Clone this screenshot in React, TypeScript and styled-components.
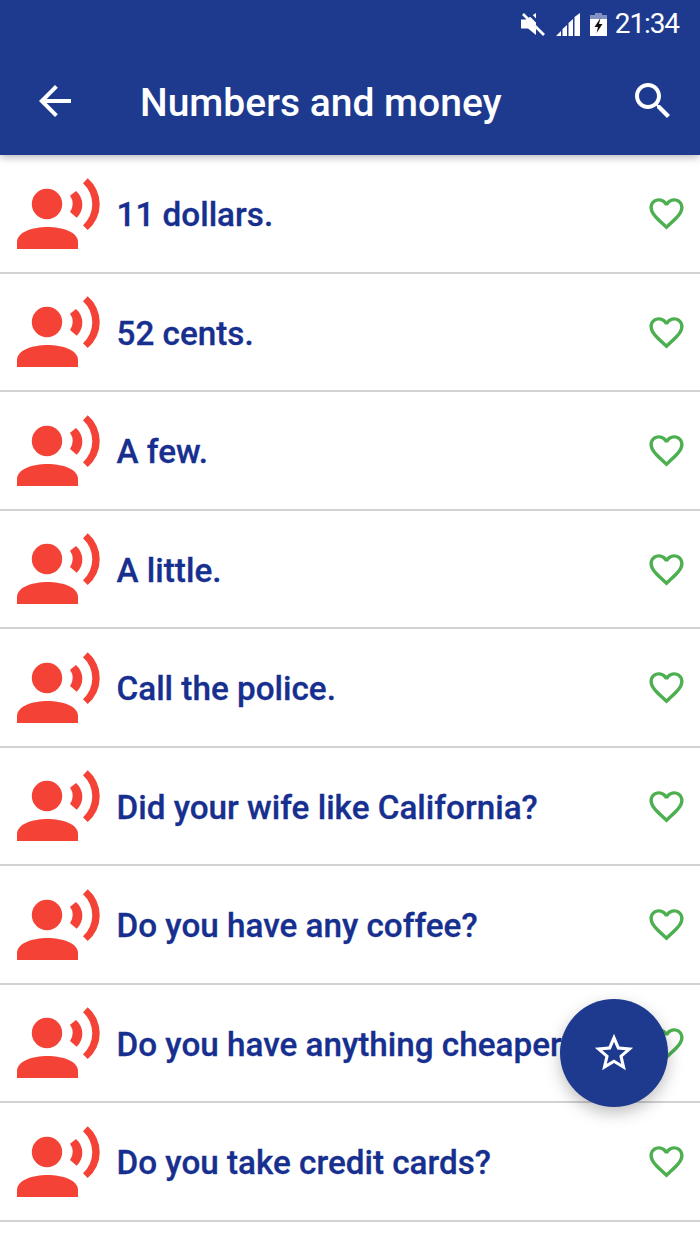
import styled, { createGlobalStyle } from 'styled-components';

const phrases = [
  '11 dollars.',
  '52 cents.',
  'A few.',
  'A little.',
  'Call the police.',
  'Did your wife like California?',
  'Do you have any coffee?',
  'Do you have anything cheaper?',
  'Do you take credit cards?',
];

const GlobalStyle = createGlobalStyle`
  html, body {
    margin: 0;
    padding: 0;
    background: #fff;
    font-family: Roboto, "Liberation Sans", sans-serif;
  }
`;

const Screen = styled.div`
  position: relative;
  width: 700px;
  height: 1244px;
  overflow: hidden;
  background: #fff;
`;

const Header = styled.header`
  position: relative;
  z-index: 1;
  height: 155px;
  background: #1e3a8f;
  box-shadow: 0 2px 8px rgba(0, 0, 0, 0.3);
`;

const StatusBar = styled.div`
  height: 48px;
  display: flex;
  align-items: center;
  justify-content: flex-end;
  padding-right: 21px;
  color: #fff;
`;

const Clock = styled.span`
  font-size: 28px;
  line-height: 48px;
  letter-spacing: -1.1px;
  margin-left: 8px;
`;

const StatusIcon = styled.svg<{ $gap?: number }>`
  display: block;
  margin-left: ${(p) => p.$gap ?? 0}px;
`;

const Toolbar = styled.div`
  height: 107px;
  display: flex;
  align-items: flex-start;
  padding: 29px 23px 0 31px;
`;

const Title = styled.h1`
  flex: 1;
  margin: 0 0 0 61px;
  padding-top: 2px;
  font-size: 39px;
  line-height: 48px;
  font-weight: 500;
  color: #fff;
  white-space: nowrap;
`;

const ToolIcon = styled.svg`
  display: block;
  width: 48px;
  height: 48px;
  fill: #fff;
`;

const List = styled.ul`
  list-style: none;
  margin: 0;
  padding: 0;
`;

const Row = styled.li`
  box-sizing: border-box;
  height: 118.5px;
  display: flex;
  align-items: center;
  padding: 1px 13px 0 14px;
  border-bottom: 2px solid #d2d2d2;
`;

const SpeakerIcon = styled.svg`
  flex: none;
  width: 88px;
  height: 76px;
  fill: #f44336;
`;

const Phrase = styled.span`
  flex: 1;
  margin-left: 14.5px;
  padding-top: 2px;
  font-size: 33.25px;
  font-weight: 500;
  color: #172f8f;
  -webkit-text-stroke: 0.3px #172f8f;
  white-space: nowrap;
`;

const Heart = styled.svg`
  flex: none;
  width: 41px;
  height: 41px;
  fill: #4caf50;
`;

const Fab = styled.button`
  position: absolute;
  left: 560px;
  top: 999px;
  width: 108px;
  height: 108px;
  padding: 0;
  border: none;
  border-radius: 50%;
  background: #1e3a8f;
  display: flex;
  align-items: center;
  justify-content: center;
  box-shadow: 0 6px 16px rgba(0, 0, 0, 0.25);
`;

const FabStar = styled.svg`
  width: 46px;
  height: 46px;
  fill: #fff;
`;

function SpeakingPerson() {
  return (
    <SpeakerIcon viewBox="0 0 88 76">
      <circle cx="33" cy="28" r="15.2" />
      <path d="M3 73V66C3 56 19 51 33.5 51C48 51 64 56 64 66V73Z" />
      <path d="M62 15A17.9 17.9 0 0 1 62.7 41.7L56 36A13.6 13.6 0 0 0 56 19.7Z" />
      <path d="M73.7 2.3A33.8 33.8 0 0 1 73.7 54L69 49.3A28.4 28.4 0 0 0 69 7.3Z" />
    </SpeakerIcon>
  );
}

function StatusIcons() {
  return (
    <>
      <StatusIcon width="24" height="23" viewBox="0 0 24 23">
        <path fill="#fff" d="M0 6.5h5L15 0v22L7 15.5H0Z" />
        <path d="M1 -1L23 21" stroke="#1e3a8f" strokeWidth="3" transform="translate(3 -2.5)" />
        <path d="M2 1L23 22" stroke="#fff" strokeWidth="2.6" />
      </StatusIcon>
      <StatusIcon $gap={11} width="25" height="23" viewBox="0 0 25 23">
        <path fill="#fff" d="M0 23L5 18V23ZM6.5 16L11 12V23H6.5ZM12.5 10L17 6V23H12.5ZM18.5 4L24 0V23H18.5Z" />
      </StatusIcon>
      <StatusIcon $gap={9} width="17" height="23" viewBox="0 0 17 23">
        <path fill="#fff" fillOpacity="0.45" d="M5 0h7v2h5v4H0V2h5Z" />
        <path fill="#fff" d="M0 6h17v17H0Z" />
        <path fill="#111" d="M10.5 5L4.5 14H8L6.5 20L12.5 11H9Z" />
      </StatusIcon>
    </>
  );
}

export default function App() {
  return (
    <Screen>
      <GlobalStyle />
      <Header>
        <StatusBar>
          <StatusIcons />
          <Clock>21:34</Clock>
        </StatusBar>
        <Toolbar>
          <ToolIcon viewBox="0 0 24 24">
            <path d="M20 11H7.83l5.59-5.59L12 4l-8 8 8 8 1.41-1.41L7.83 13H20v-2z" />
          </ToolIcon>
          <Title>Numbers and money</Title>
          <ToolIcon viewBox="0 0 24 24">
            <path d="M15.5 14h-.79l-.28-.27C15.41 12.59 16 11.11 16 9.5 16 5.91 13.09 3 9.5 3S3 5.91 3 9.5 5.91 16 9.5 16c1.61 0 3.09-.59 4.23-1.57l.27.28v.79l5 4.99L20.49 19l-4.99-5zm-6 0C7.01 14 5 11.99 5 9.5S7.01 5 9.5 5 14 7.01 14 9.5 11.99 14 9.5 14z" />
          </ToolIcon>
        </Toolbar>
      </Header>
      <List>
        {phrases.map((phrase) => (
          <Row key={phrase}>
            <SpeakingPerson />
            <Phrase>{phrase}</Phrase>
            <Heart viewBox="0 0 24 24">
              <path d="M16.5 3c-1.74 0-3.41.81-4.5 2.09C10.91 3.81 9.24 3 7.5 3 4.42 3 2 5.42 2 8.5c0 3.78 3.4 6.86 8.55 11.54L12 21.35l1.45-1.32C18.6 15.36 22 12.28 22 8.5 22 5.42 19.58 3 16.5 3zm-4.4 15.55l-.1.1-.1-.1C7.14 14.24 4 11.39 4 8.5 4 6.5 5.5 5 7.5 5c1.54 0 3.04.99 3.57 2.36h1.87C13.46 5.99 14.96 5 16.5 5c2 0 3.5 1.5 3.5 3.5 0 2.89-3.14 5.74-7.9 10.05z" />
            </Heart>
          </Row>
        ))}
      </List>
      <Fab>
        <FabStar viewBox="0 0 24 24">
          <path d="M22 9.24l-7.19-.62L12 2 9.19 8.63 2 9.24l5.46 4.73L5.82 21 12 17.27 18.18 21l-1.63-7.03L22 9.24zM12 15.4l-3.76 2.27 1-4.28-3.32-2.88 4.38-.38L12 6.1l1.71 4.04 4.38.38-3.32 2.88 1 4.28L12 15.4z" />
        </FabStar>
      </Fab>
    </Screen>
  );
}
